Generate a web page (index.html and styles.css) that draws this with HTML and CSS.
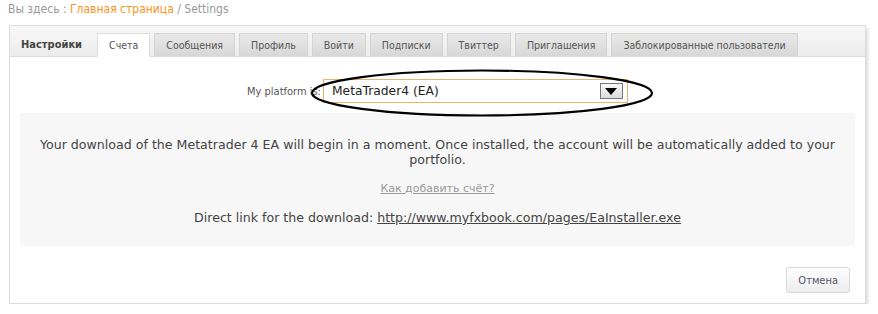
FILE: index.html
```html
<!DOCTYPE html>
<html lang="ru">
<head>
    <meta charset="UTF-8">
    <title>Settings</title>
    <link rel="stylesheet" href="styles.css">
</head>
<body>
    <div class="crumbs">
        Вы здесь : <a href="#">Главная страница</a> / Settings
    </div>

    <div class="panel">
        <div class="tabs">
            <span class="tabs-title">Настройки</span>
            <a class="tab active" href="#">Счета</a>
            <a class="tab" href="#">Сообщения</a>
            <a class="tab" href="#">Профиль</a>
            <a class="tab" href="#">Войти</a>
            <a class="tab" href="#">Подписки</a>
            <a class="tab" href="#">Твиттер</a>
            <a class="tab" href="#">Приглашения</a>
            <a class="tab" href="#">Заблокированные пользователи</a>
        </div>

        <div class="panel-body">
            <div class="form-row">
                <label>My platform is:</label>
                <div class="select">
                    <span>MetaTrader4 (EA)</span>
                    <span class="select-btn"><span class="arrow"></span></span>
                </div>
                <svg class="circle" width="350" height="50" viewBox="0 0 350 50">
                    <ellipse cx="174" cy="24" rx="170" ry="22.5" fill="none" stroke="#000" stroke-width="2.2"/>
                </svg>
            </div>

            <div class="notice">
                <p>Your download of the Metatrader 4 EA will begin in a moment. Once installed, the account will be automatically added to your portfolio.</p>
                <p class="help"><a href="#">Как добавить счёт?</a></p>
                <p>Direct link for the download: <a class="dl" href="#">http://www.myfxbook.com/pages/EaInstaller.exe</a></p>
            </div>

            <div class="actions">
                <button class="btn">Отмена</button>
            </div>
        </div>
    </div>
</body>
</html>
```

FILE: styles.css
```css
body {
    margin: 0;
    padding: 0 12px 0 8px;
    background: #fff;
    font-family: 'DejaVu Sans', sans-serif;
    color: #444;
}
.crumbs {
    font-family: 'DejaVu Sans', sans-serif;
    font-stretch: condensed;
    font-size: 12px;
    color: #999;
    height: 18px;
    line-height: 18px;
    margin-bottom: 7px;
}
.crumbs a {
    color: #f7941d;
    text-decoration: none;
}
.panel {
    margin-left: 1px;
    border: 1px solid #ddd;
    background: #fff;
    box-shadow: 2px 3px 3px rgba(0, 0, 0, 0.14);
}
.tabs {
    display: flex;
    align-items: flex-end;
    gap: 4px;
    height: 30px;
    padding-left: 11px;
    background: linear-gradient(#f8f8f8, #ececec);
    border-bottom: 1px solid #ddd;
    font-size: 10.5px;
    font-stretch: condensed;
}
.tabs-title {
    font-weight: bold;
    font-size: 11px;
    color: #444;
    padding: 0 11px 0 0;
    line-height: 22px;
}
.tab {
    display: block;
    height: 22px;
    line-height: 22px;
    padding: 0 11px;
    color: #555;
    text-decoration: none;
    background: linear-gradient(#e9e9e9, #d7d7d7);
    border: 1px solid #d4d4d4;
    margin-bottom: -1px;
    border-bottom: 1px solid #ddd;
}
.tab.active {
    background: #fff;
    border-color: #ddd;
    border-bottom-color: #fff;
}
.panel-body {
    padding: 22px 10px 10px 10px;
}
.form-row {
    position: relative;
    display: flex;
    justify-content: center;
    align-items: center;
    gap: 2px;
    margin-bottom: 10px;
}
.form-row label {
    font-size: 11px;
    font-stretch: condensed;
    color: #555;
}
.select {
    display: flex;
    align-items: center;
    justify-content: space-between;
    box-sizing: border-box;
    width: 305px;
    height: 24px;
    padding: 0 4px 0 8px;
    border: 1px solid #e8b666;
    font-size: 12.3px;
    color: #222;
}
.select-btn {
    display: flex;
    align-items: center;
    justify-content: center;
    box-sizing: border-box;
    width: 23px;
    height: 16px;
    border: 1px solid #777;
    background: linear-gradient(#fafafa, #dcdcdc);
}
.arrow {
    width: 0;
    height: 0;
    border-left: 6px solid transparent;
    border-right: 6px solid transparent;
    border-top: 7px solid #000;
}
.circle {
    position: absolute;
    left: 288px;
    top: -10px;
    pointer-events: none;
}
.notice {
    background: #f7f7f7;
    padding: 24px 10px 21px;
    text-align: center;
    font-size: 12.6px;
    line-height: 15px;
}
.notice p {
    margin: 0 0 14px;
}
.notice p:last-child {
    margin: 0;
}
.notice .help {
    font-size: 11px;
    margin-bottom: 14px;
}
.notice .help a {
    color: #999;
}
.notice .dl {
    color: #444;
}
.actions {
    display: flex;
    justify-content: flex-end;
    padding: 21px 5px 0 0;
}
.btn {
    height: 26px;
    padding: 0 11px;
    border: 1px solid #d8d8d8;
    border-radius: 3px;
    background: linear-gradient(#fefefe, #ededed);
    font-family: 'DejaVu Sans', sans-serif;
    font-stretch: condensed;
    font-size: 11px;
    color: #556;
}
```
